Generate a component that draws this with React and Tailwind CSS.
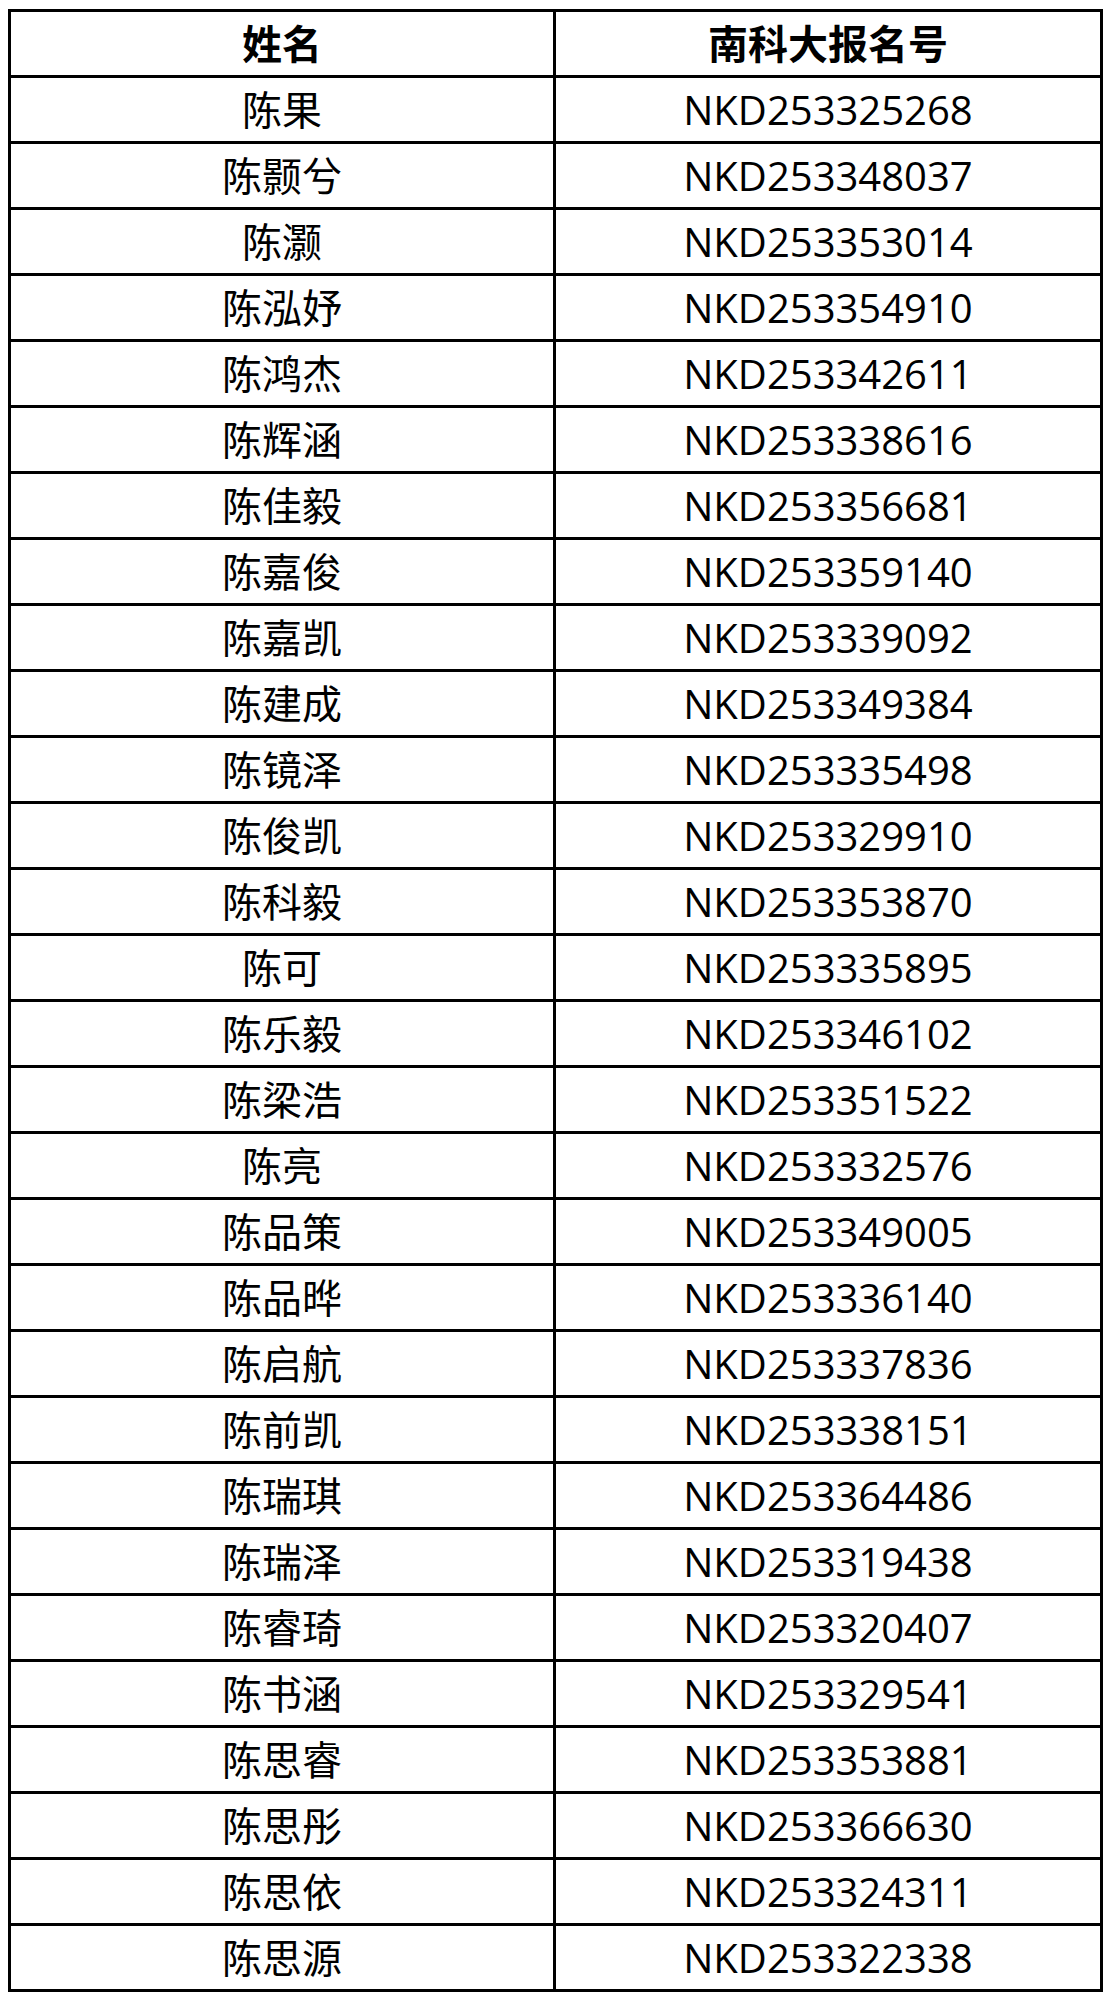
const rows = [
  ['陈果', 'NKD253325268'],
  ['陈颢兮', 'NKD253348037'],
  ['陈灏', 'NKD253353014'],
  ['陈泓妤', 'NKD253354910'],
  ['陈鸿杰', 'NKD253342611'],
  ['陈辉涵', 'NKD253338616'],
  ['陈佳毅', 'NKD253356681'],
  ['陈嘉俊', 'NKD253359140'],
  ['陈嘉凯', 'NKD253339092'],
  ['陈建成', 'NKD253349384'],
  ['陈镜泽', 'NKD253335498'],
  ['陈俊凯', 'NKD253329910'],
  ['陈科毅', 'NKD253353870'],
  ['陈可', 'NKD253335895'],
  ['陈乐毅', 'NKD253346102'],
  ['陈梁浩', 'NKD253351522'],
  ['陈亮', 'NKD253332576'],
  ['陈品策', 'NKD253349005'],
  ['陈品晔', 'NKD253336140'],
  ['陈启航', 'NKD253337836'],
  ['陈前凯', 'NKD253338151'],
  ['陈瑞琪', 'NKD253364486'],
  ['陈瑞泽', 'NKD253319438'],
  ['陈睿琦', 'NKD253320407'],
  ['陈书涵', 'NKD253329541'],
  ['陈思睿', 'NKD253353881'],
  ['陈思彤', 'NKD253366630'],
  ['陈思依', 'NKD253324311'],
  ['陈思源', 'NKD253322338'],
]

function Row({ name, code, head, first }) {
  return (
    <div className={`flex ${first ? 'h-[63px]' : 'h-[66px] border-t-[3px] border-black'}`}>
      <div className={`w-[545px] border-r-[3px] border-black flex items-center justify-center ${head ? 'font-bold' : ''}`}>
        {name}
      </div>
      <div className={`flex-1 flex items-center justify-center ${head ? 'font-bold' : ''}`}>
        {code}
      </div>
    </div>
  )
}

export default function App() {
  return (
    <div className="w-[1113px] h-[2004px] bg-white pt-[9px] pl-[8px] text-black">
      <div
        className="w-[1095px] border-[3px] border-black text-[40px] leading-none"
        style={{ fontFamily: '"Open Sans", "Noto Sans CJK SC", sans-serif' }}
      >
        <Row name="姓名" code="南科大报名号" head first />
        {rows.map(([n, c]) => (
          <Row key={c} name={n} code={c} />
        ))}
      </div>
    </div>
  )
}
